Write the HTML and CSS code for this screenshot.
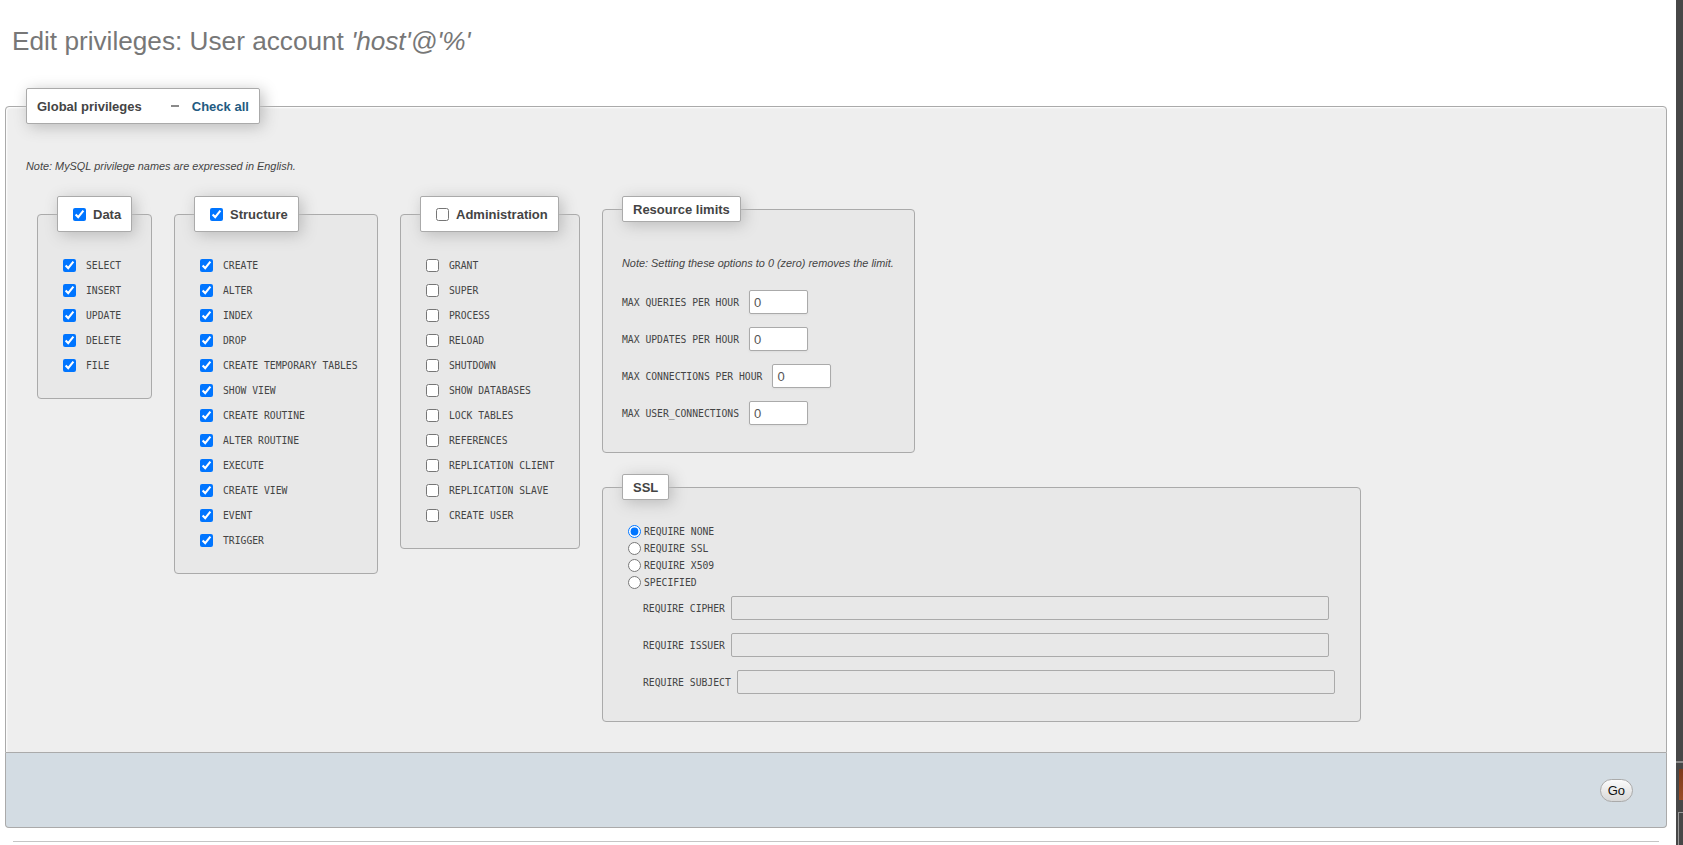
FILE: index.html
```html
<!DOCTYPE html>
<html lang="en">
<head>
<meta charset="utf-8">
<title>Edit privileges</title>
<link rel="stylesheet" href="styles.css">
</head>
<body>
<div class="screen">
  <main class="page">
    <h2 class="title">Edit privileges: User account <i>'host'@'%'</i></h2>
    <form class="priv-form" action="#">
      <fieldset class="panel">
        <legend class="legend"><span class="legend-row legend-tall">Global privileges<span class="dash"></span><a class="check-all" href="#">Check all</a></span></legend>
        <p class="note">Note: MySQL privilege names are expressed in English.</p>
        <div class="groups">
          <fieldset class="group group-data">
            <legend class="legend"><label class="legend-row legend-tall"><input type="checkbox" class="legend-box" checked><span>Data</span></label></legend>
            <label class="item"><input type="checkbox" checked><span class="code">SELECT</span></label>
            <label class="item"><input type="checkbox" checked><span class="code">INSERT</span></label>
            <label class="item"><input type="checkbox" checked><span class="code">UPDATE</span></label>
            <label class="item"><input type="checkbox" checked><span class="code">DELETE</span></label>
            <label class="item"><input type="checkbox" checked><span class="code">FILE</span></label>
          </fieldset>
          <fieldset class="group group-structure">
            <legend class="legend"><label class="legend-row legend-tall"><input type="checkbox" class="legend-box" checked><span>Structure</span></label></legend>
            <label class="item"><input type="checkbox" checked><span class="code">CREATE</span></label>
            <label class="item"><input type="checkbox" checked><span class="code">ALTER</span></label>
            <label class="item"><input type="checkbox" checked><span class="code">INDEX</span></label>
            <label class="item"><input type="checkbox" checked><span class="code">DROP</span></label>
            <label class="item"><input type="checkbox" checked><span class="code">CREATE TEMPORARY TABLES</span></label>
            <label class="item"><input type="checkbox" checked><span class="code">SHOW VIEW</span></label>
            <label class="item"><input type="checkbox" checked><span class="code">CREATE ROUTINE</span></label>
            <label class="item"><input type="checkbox" checked><span class="code">ALTER ROUTINE</span></label>
            <label class="item"><input type="checkbox" checked><span class="code">EXECUTE</span></label>
            <label class="item"><input type="checkbox" checked><span class="code">CREATE VIEW</span></label>
            <label class="item"><input type="checkbox" checked><span class="code">EVENT</span></label>
            <label class="item"><input type="checkbox" checked><span class="code">TRIGGER</span></label>
          </fieldset>
          <fieldset class="group group-admin">
            <legend class="legend"><label class="legend-row legend-tall"><input type="checkbox" class="legend-box"><span>Administration</span></label></legend>
            <label class="item"><input type="checkbox"><span class="code">GRANT</span></label>
            <label class="item"><input type="checkbox"><span class="code">SUPER</span></label>
            <label class="item"><input type="checkbox"><span class="code">PROCESS</span></label>
            <label class="item"><input type="checkbox"><span class="code">RELOAD</span></label>
            <label class="item"><input type="checkbox"><span class="code">SHUTDOWN</span></label>
            <label class="item"><input type="checkbox"><span class="code">SHOW DATABASES</span></label>
            <label class="item"><input type="checkbox"><span class="code">LOCK TABLES</span></label>
            <label class="item"><input type="checkbox"><span class="code">REFERENCES</span></label>
            <label class="item"><input type="checkbox"><span class="code">REPLICATION CLIENT</span></label>
            <label class="item"><input type="checkbox"><span class="code">REPLICATION SLAVE</span></label>
            <label class="item"><input type="checkbox"><span class="code">CREATE USER</span></label>
          </fieldset>
          <div class="side">
            <fieldset class="group limits">
              <legend class="legend"><span class="legend-row">Resource limits</span></legend>
              <p class="note">Note: Setting these options to 0 (zero) removes the limit.</p>
              <div class="limit-list">
                <label class="limit"><span class="code">MAX QUERIES PER HOUR</span><input class="num" type="text" value="0"></label>
                <label class="limit"><span class="code">MAX UPDATES PER HOUR</span><input class="num" type="text" value="0"></label>
                <label class="limit"><span class="code">MAX CONNECTIONS PER HOUR</span><input class="num" type="text" value="0"></label>
                <label class="limit"><span class="code">MAX USER_CONNECTIONS</span><input class="num" type="text" value="0"></label>
              </div>
            </fieldset>
            <fieldset class="group ssl">
              <legend class="legend"><span class="legend-row">SSL</span></legend>
              <div class="ssl-options">
                <label class="radio"><input type="radio" name="ssl_type" checked><span class="code">REQUIRE NONE</span></label>
                <label class="radio"><input type="radio" name="ssl_type"><span class="code">REQUIRE SSL</span></label>
                <label class="radio"><input type="radio" name="ssl_type"><span class="code">REQUIRE X509</span></label>
                <label class="radio"><input type="radio" name="ssl_type"><span class="code">SPECIFIED</span></label>
              </div>
              <div class="ssl-fields">
                <label class="ssl-field"><span class="code">REQUIRE CIPHER</span><input class="ssl-input" type="text" disabled></label>
                <label class="ssl-field"><span class="code">REQUIRE ISSUER</span><input class="ssl-input" type="text" disabled></label>
                <label class="ssl-field"><span class="code">REQUIRE SUBJECT</span><input class="ssl-input" type="text" disabled></label>
              </div>
            </fieldset>
          </div>
        </div>
      </fieldset>
      <div class="footer">
        <button class="go" type="button">Go</button>
      </div>
    </form>
    <hr class="rule">
  </main>
  <div class="desk"></div>
</div>
</body>
</html>
```

FILE: styles.css
```css
* {
  box-sizing: border-box;
}

html,
body {
  margin: 0;
  padding: 0;
}

body {
  font-family: "Liberation Sans", Arial, sans-serif;
  font-size: 13px;
  color: #444;
  background: #fff;
  overflow: hidden;
}

.screen {
  display: flex;
  height: 845px;
}

.page {
  flex: 0 0 1676px;
  width: 1676px;
}

/* strip of desktop showing at the window edge */
.desk {
  flex: 1;
  background:
    linear-gradient(#7b3a1c, #9a4d26) 3px 769px / 4px 31px no-repeat,
    linear-gradient(#8c8c8c, #8c8c8c) 0 761px / 100% 2px no-repeat,
    linear-gradient(#9a9a9a, #9a9a9a) 2px 812px / 100% 1px no-repeat,
    linear-gradient(#9a9a9a, #9a9a9a) 2px 812px / 1px 40px no-repeat,
    #474747;
}

.title {
  margin: 25px 0 31px;
  padding-left: 12px;
  font-size: 26.2px;
  line-height: 32px;
  font-weight: normal;
  color: #777;
  white-space: nowrap;
}

.title i {
  font-style: italic;
}

.priv-form {
  margin: 0;
}

fieldset {
  margin: 0;
  min-width: 0;
}

.panel {
  margin-left: 5px;
  width: 1662px;
  border: 1px solid #aaa;
  border-radius: 4px 4px 0 0;
  background: #eee;
  padding: 0 19px 30px 20px;
  box-shadow: 1px 1px 2px #fff inset;
}

.legend {
  padding: 0 10px;
  border: 1px solid #aaa;
  border-radius: 2px;
  background: #fff;
  box-shadow: 3px 3px 15px #bbb;
  font-weight: bold;
  font-size: 13px;
  color: #444;
}

.legend-row {
  display: flex;
  align-items: center;
  height: 24px;
  white-space: nowrap;
}

.legend-tall {
  height: 34px;
}

.legend-box {
  margin: 0 7px 0 5px;
}

.dash {
  display: block;
  width: 8px;
  height: 2px;
  background: #8a8a8a;
  margin: 0 13px 0 29px;
}

.check-all {
  color: #235a81;
  text-decoration: none;
}

.note {
  margin: 0;
  font-size: 10.9px;
  line-height: 14px;
  font-style: italic;
  color: #444;
  white-space: nowrap;
}

.panel > .note {
  margin-top: 35px;
}

.groups {
  display: flex;
  align-items: flex-start;
  gap: 22px;
  margin: 23px 0 0 11px;
}

.group {
  border: 1px solid #aaa;
  border-radius: 4px;
  background: #e8e8e8;
  padding: 21px 19px 20px;
}

.group-data {
  width: 115px;
}

.group-structure {
  width: 204px;
}

.group-admin {
  width: 180px;
}

.item {
  display: flex;
  align-items: center;
  height: 25px;
  padding-left: 6px;
}

.item input {
  margin: 0 10px 0 0;
}

.code {
  font-family: "DejaVu Sans Mono", "Liberation Mono", monospace;
  font-size: 9.72px;
  color: #444;
  white-space: nowrap;
}

.side {
  display: flex;
  flex-direction: column;
  gap: 21px;
}

.limits {
  width: 313px;
  padding: 0 19px 27px;
}

.limits .note {
  margin-top: 34px;
}

.limit-list {
  margin-top: 20px;
  display: flex;
  flex-direction: column;
  gap: 13px;
}

.limit {
  display: flex;
  align-items: center;
  gap: 10px;
}

.num {
  width: 59px;
  height: 24px;
  margin: 0;
  border: 1px solid #aaa;
  border-radius: 2px;
  background: #fff;
  padding: 0 4px;
  font-family: "Liberation Sans", Arial, sans-serif;
  font-size: 13px;
  color: #555;
  box-shadow: 0 1px 2px #ddd;
}

.ssl {
  width: 759px;
  padding: 0 19px 27px;
}

.ssl-options {
  margin-top: 23px;
}

.radio {
  display: flex;
  align-items: center;
  height: 17px;
}

.radio input {
  margin: 0 3px 0 6px;
}

.ssl-fields {
  margin-top: 5px;
  padding-left: 21px;
  display: flex;
  flex-direction: column;
  gap: 13px;
}

.ssl-field {
  display: flex;
  align-items: center;
  gap: 6px;
}

.ssl-input {
  width: 598px;
  height: 24px;
  margin: 0;
  border: 1px solid #aaa;
  border-radius: 2px;
  background: #e8e8e8;
}

.footer {
  margin-left: 5px;
  width: 1662px;
  height: 75px;
  border: 1px solid #aaa;
  border-top: 0;
  border-radius: 0 0 4px 4px;
  background: #d3dce3;
  display: flex;
  align-items: center;
  justify-content: flex-end;
  padding-right: 33px;
}

.go {
  font-family: "Liberation Sans", Arial, sans-serif;
  font-size: 13px;
  line-height: 15px;
  padding: 3px 7px;
  border: 1px solid #aaa;
  border-radius: 12px;
  background: linear-gradient(#fbfbfb, #d8d8d8);
  color: #111;
}

.rule {
  margin: 13px 0 0 13px;
  width: 1646px;
  height: 0;
  border: 0;
  border-top: 1px solid #c5c5c5;
}
```
